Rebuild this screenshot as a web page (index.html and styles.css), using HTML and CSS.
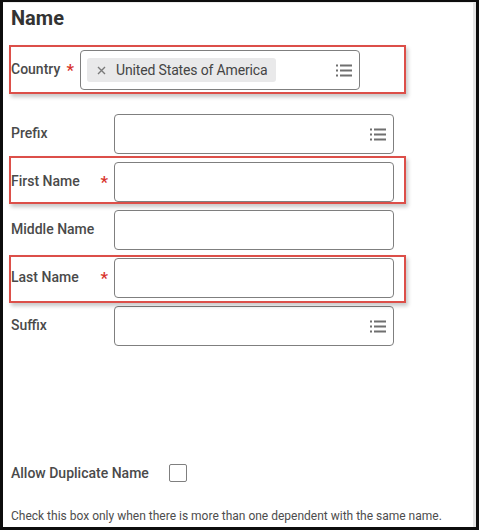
FILE: index.html
```html
<!DOCTYPE html>
<html lang="en">
<head>
<meta charset="utf-8">
<title>Name</title>
<link rel="stylesheet" href="styles.css">
</head>
<body>
<div class="frame">
  <div class="panel">
    <h1 class="title">Name</h1>

    <div class="row row-country">
      <div class="label label-short"><span>Country</span><span class="req">*</span></div>
      <div class="input">
        <span class="pill">
          <svg class="pill-x" width="9" height="9" viewBox="0 0 9 9"><path d="M1 1L8 8M8 1L1 8" stroke="#7a7a7a" stroke-width="1.4" fill="none"/></svg>
          <span class="pill-text">United States of America</span>
        </span>
        <svg class="list-icon" width="16" height="13" viewBox="0 0 16 13"><g fill="#6f6f6f"><rect x="0" y="0.5" width="2" height="2"/><rect x="4" y="0.5" width="12" height="2"/><rect x="0" y="5.5" width="2" height="2"/><rect x="4" y="5.5" width="12" height="2"/><rect x="0" y="10.5" width="2" height="2"/><rect x="4" y="10.5" width="12" height="2"/></g></svg>
      </div>
    </div>

    <div class="row row-first">
      <div class="label"><span>Prefix</span></div>
      <div class="input">
        <svg class="list-icon" width="16" height="13" viewBox="0 0 16 13"><g fill="#6f6f6f"><rect x="0" y="0.5" width="2" height="2"/><rect x="4" y="0.5" width="12" height="2"/><rect x="0" y="5.5" width="2" height="2"/><rect x="4" y="5.5" width="12" height="2"/><rect x="0" y="10.5" width="2" height="2"/><rect x="4" y="10.5" width="12" height="2"/></g></svg>
      </div>
    </div>

    <div class="row">
      <div class="label"><span>First Name</span><span class="req">*</span></div>
      <div class="input"></div>
    </div>

    <div class="row">
      <div class="label"><span>Middle Name</span></div>
      <div class="input"></div>
    </div>

    <div class="row">
      <div class="label"><span>Last Name</span><span class="req">*</span></div>
      <div class="input"></div>
    </div>

    <div class="row">
      <div class="label"><span>Suffix</span></div>
      <div class="input">
        <svg class="list-icon" width="16" height="13" viewBox="0 0 16 13"><g fill="#6f6f6f"><rect x="0" y="0.5" width="2" height="2"/><rect x="4" y="0.5" width="12" height="2"/><rect x="0" y="5.5" width="2" height="2"/><rect x="4" y="5.5" width="12" height="2"/><rect x="0" y="10.5" width="2" height="2"/><rect x="4" y="10.5" width="12" height="2"/></g></svg>
      </div>
    </div>

    <div class="check-row">
      <span class="check-label">Allow Duplicate Name</span>
      <span class="checkbox"></span>
    </div>

    <p class="help">Check this box only when there is more than one dependent with the same name.</p>
  </div>

  <div class="mark mark-country"></div>
  <div class="mark mark-first"></div>
  <div class="mark mark-last"></div>
</div>
</body>
</html>
```

FILE: styles.css
```css
html, body {
  margin: 0;
  padding: 0;
  background: #ffffff;
}

.frame {
  position: relative;
  box-sizing: border-box;
  width: 479px;
  height: 530px;
  border-style: solid;
  border-color: #0d0d0d;
  border-width: 2px 3px 3px 3px;
  font-family: Roboto, "Liberation Sans", sans-serif;
  color: #333333;
  overflow: hidden;
}

.panel {
  box-sizing: border-box;
  height: 100%;
  border-right: 3px solid #e4e4e4;
  border-top: 1px solid #ececec;
  padding: 0 0 0 8px;
}

.title {
  margin: 3px 0 0 0;
  font-size: 20px;
  line-height: 24px;
  font-weight: 700;
  color: #333333;
}

.row {
  display: flex;
  align-items: center;
  height: 40px;
  margin-top: 8px;
}

.row-country {
  margin-top: 20px;
}

.row-first {
  margin-top: 24px;
}

.label {
  box-sizing: border-box;
  width: 97px;
  margin-right: 6px;
  display: flex;
  justify-content: space-between;
  align-items: center;
  font-size: 14px;
  font-weight: 500;
  color: #4a4a4a;
  position: relative;
  top: -1px;
}

.label-short {
  width: 63px;
}

.req {
  color: #d8322b;
  font-size: 17px;
  font-weight: 500;
  line-height: 14px;
  position: relative;
  top: 1px;
}

.input {
  box-sizing: border-box;
  width: 280px;
  height: 40px;
  border: 1px solid #7f7f7f;
  border-radius: 4px;
  display: flex;
  align-items: center;
  padding: 0 7px 0 6px;
  background: #ffffff;
}

.pill {
  box-sizing: border-box;
  display: flex;
  align-items: center;
  height: 24px;
  width: 189px;
  background: #e9e9ea;
  border-radius: 3px;
  padding: 0 0 0 10px;
}

.pill-x {
  flex: none;
  margin-right: 10px;
}

.pill-text {
  font-size: 14px;
  letter-spacing: -0.15px;
  color: #444444;
  white-space: nowrap;
}

.list-icon {
  margin-left: auto;
  flex: none;
}

.check-row {
  display: flex;
  align-items: center;
  height: 18px;
  margin-top: 118px;
}

.check-label {
  font-size: 14px;
  font-weight: 500;
  color: #4a4a4a;
  width: 158px;
}

.checkbox {
  box-sizing: border-box;
  width: 18px;
  height: 18px;
  border: 1px solid #7f7f7f;
  border-radius: 2px;
  background: #ffffff;
}

.help {
  margin: 26px 0 0 0;
  font-size: 12px;
  line-height: 16px;
  color: #4d4d4d;
}

.mark {
  position: absolute;
  left: 6px;
  width: 397px;
  box-sizing: border-box;
  border: 2px solid #dc4f49;
  box-shadow: 2px 3px 4px rgba(0, 0, 0, 0.22);
  pointer-events: none;
}

.mark-country {
  top: 43px;
  height: 49px;
}

.mark-first {
  top: 154px;
  height: 48px;
}

.mark-last {
  top: 253px;
  height: 48px;
}
```
